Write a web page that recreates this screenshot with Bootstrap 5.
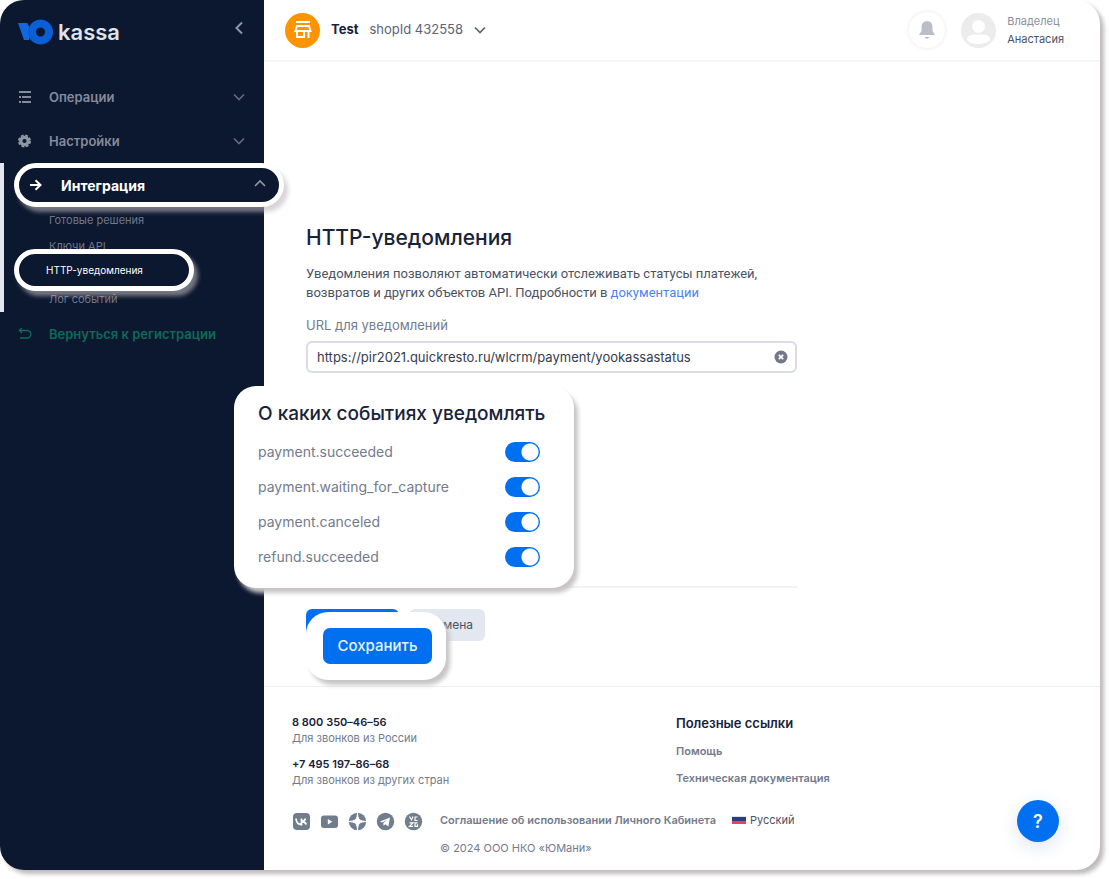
<!DOCTYPE html>
<html lang="ru">
<head>
<meta charset="utf-8">
<meta name="viewport" content="width=device-width, initial-scale=1">
<title>ЮKassa — HTTP-уведомления</title>
<link href="https://cdn.jsdelivr.net/npm/bootstrap@5.3.0/dist/css/bootstrap.min.css" rel="stylesheet">
<style>
  :root { --navy: #0c182f; --blue: #0070f0; --ink: #17233b; --muted: #737b8c; --lift: 4px 5px 4px #c9c5c7; }
  body { font-family: Inter, "Noto Sans", sans-serif; font-size: 13px; line-height: 19px; color: #4a5264; background: #fff; }
  a { text-decoration: none; color: var(--muted); }
  .page { min-height: 100vh; padding: 0 9px 9px 0; }
  .shell { border-radius: 24px; box-shadow: 4px 4px 4px #bfbbbc; background: #fff; }
  /* sidebar */
  .side { width: 264px; flex: none; background: var(--navy); border-radius: 24px 0 0 24px; z-index: 2; }
  .brand { height: 63px; padding: 0 20px 0 18px; color: #dfe3ea; font: 600 22px/26px Inter, sans-serif; }
  .side-item { height: 44px; padding: 0 19px 0 17px; font-size: 13px; font-weight: 600; color: #858b9b; }
  .side-item svg.lead-icon { width: 15px; margin-right: 17px; }
  .side-item svg.ms-auto { color: #636a7c; }
  .group { border-left: 4px solid #e3e6f1; }
  .pill { border: 5px solid #fff; border-radius: 22px; background: var(--navy); color: #fff; box-shadow: 4px 5px 4px rgba(190,184,188,.6); z-index: 1; }
  .pill-wide { height: 44px; margin: 0 -20px 0 10px; padding: 0 13px 0 10px; gap: 18px; font-size: 14px; font-weight: 700; }
  .pill-sub { height: 42px; margin: -10px 70px -5px 10px; padding: 0 27px; font-size: 10px; }
  .side-sub { height: 26px; padding-left: 45px; font-size: 11px; color: #70778a; }
  .side-item.back { color: #0e6a59; }
  /* header */
  .top { height: 62px; border-bottom: 2px solid #f3f4f6; padding: 0 36px 0 21px; }
  .shop { width: 35px; height: 35px; background: #ff9300; }
  .shop-pick { font-size: 13px; color: #5b6375; gap: 11px; margin-left: 11px; }
  .bell { width: 36px; height: 36px; box-shadow: 0 0 5px #e8e8ea; background: #fff; }
  .who { font-size: 11px; line-height: 18px; margin-left: 11px; color: #8b909d; }
  /* form */
  .content { padding: 162px 42px 45px; }
  .content-form { max-width: 491px; }
  .intro { font: 13px/19px Roboto, Inter, sans-serif; margin-bottom: 14px; }
  h1 { font-size: 21px; line-height: 28px; font-weight: 500; color: var(--ink); margin-bottom: 12px; }
  h2 { font-size: 19px; line-height: 24px; font-weight: 500; color: var(--ink); margin-bottom: 8px; white-space: nowrap; }
  .url-label { margin-bottom: 6px; color: var(--muted); }
  .url { height: 32px; border: 2px solid #d9dbe8; border-radius: 6px; font-size: 13px; padding: 0 36px 0 9px; color: #343c4e; }
  .clear { top: 8px; right: 9px; }
  .events { width: 340px; height: 202px; margin: 13px 0 -2px -72px; padding: 16px 34px 0 24px; border-radius: 22px; background: #fff; box-shadow: var(--lift); z-index: 3; }
  .event { height: 35px; font-size: 14px; color: var(--muted); }
  .event .form-check-input { width: 35px; height: 20px; margin: 0; border: 0; box-shadow: none; background: var(--blue) radial-gradient(circle at 25px 10px, #fff 8px, transparent 9px); }
  .rule { border-top: 2px solid #f1f2f4; }
  .actions { margin-top: 21px; height: 32px; gap: 10px; }
  .actions .under { width: 93px; background: var(--blue); border-radius: 6px; }
  .cancel { width: 76px; background: #e3e7f0; border-radius: 6px; color: #4a5264; padding: 0 12px; text-align: right; font-size: 12px; }
  .save-lift { top: 3px; left: 0; width: 140px; height: 68px; padding: 16px 14px 16px 17px; border-radius: 22px; background: #fff; box-shadow: var(--lift); }
  .save { width: 100%; height: 36px; background: var(--blue); color: #e8f2ff; border-radius: 7px; font-size: 15px; font-weight: 500; padding: 0; }
  /* footer */
  .foot { border-top: 1px solid #eceef1; padding: 27px 28px 0; font-size: 11px; line-height: 16px; color: var(--muted); }
  .foot-cols { min-height: 98px; }
  .foot-phones { width: 384px; }
  .foot-phones div { margin-top: 10px; }
  .foot b { font-weight: 600; color: var(--ink); }
  .foot .links { font-weight: 600; gap: 11px; }
  .foot .links b { font-size: 13px; line-height: 18px; }
  .terms { font-weight: 600; }
  .lang { font-size: 11px; line-height: 16px; color: #4a5264; }
  .social { width: 148px; gap: 9px; }
  .help { right: 41px; bottom: 28px; width: 42px; height: 42px; background: var(--blue); color: #fff; font-size: 18px; font-weight: 600; box-shadow: 0 5px 20px #dfe3ee; padding: 0; }
</style>
</head>
<body>
<svg class="d-none">
  <symbol id="down" viewBox="0 0 12 8"><path d="M1 1.500l5 5 5-5" fill="none" stroke="currentColor" stroke-width="1.700"/></symbol>
</svg>
<div class="page d-flex">
<div class="shell d-flex flex-grow-1 position-relative">

  <aside class="side position-relative">
    <div class="brand d-flex align-items-center">
      <svg width="36" height="26" viewBox="0 0 36 26"><path d="M0 4h9l2 3v14H6z" fill="#1268e0"/><path fill-rule="evenodd" d="M22.500 0.500a12.500 12.500 0 1 0 .01 0zM22.500 8.500a4.500 4.500 0 1 1-.01 0z" fill="#0b5fd6"/></svg>
      <span class="ms-1">kassa</span>
      <a href="#" class="ms-auto d-flex mb-2" aria-label="Свернуть меню"><svg width="10" height="14" viewBox="0 0 10 14"><path d="M8 1.500L2.500 7 8 12.500" fill="none" stroke="#8f95a3" stroke-width="2"/></svg></a>
    </div>
    <nav class="mt-2 pt-1">
      <a href="#" class="side-item d-flex align-items-center">
        <svg class="lead-icon" height="14" viewBox="0 0 15 14" fill="#858b9b"><path d="M5 1h9v2H5zM5 6h9v2H5zM5 11h9v2H5zM2 1h9v2H2zM2 6h2v2H2zM2 11h2v2H2z"/></svg>
        Операции<svg class="ms-auto" width="12" height="8"><use href="#down"/></svg>
      </a>
      <a href="#" class="side-item d-flex align-items-center">
        <svg class="lead-icon" height="14" viewBox="0 0 15 14"><circle cx="7.500" cy="7" r="3.700" fill="none" stroke="#9096a5" stroke-width="3.200"/><circle cx="7.500" cy="7" r="5.600" fill="none" stroke="#9096a5" stroke-width="1.800" stroke-dasharray="2.900 1.500"/></svg>
        Настройки<svg class="ms-auto" width="12" height="8"><use href="#down"/></svg>
      </a>
      <div class="group">
        <a href="#" class="pill pill-wide d-flex align-items-center position-relative">
          <svg width="14" height="12" viewBox="0 0 14 12"><path d="M1 6h10M6.500 1.200L11.500 6l-5 4.800" fill="none" stroke="#fff" stroke-width="2"/></svg>
          <span>Интеграция</span>
          <svg class="ms-auto" width="12" height="12" viewBox="0 0 12 12"><path d="M1 7l5-5 5 5" fill="none" stroke="#8f95a3" stroke-width="1.700"/></svg>
        </a>
        <a href="#" class="side-sub d-flex align-items-center">Готовые решения</a>
        <a href="#" class="side-sub d-flex align-items-center">Ключи API</a>
        <a href="#" class="pill pill-sub d-flex align-items-center position-relative" aria-current="page">HTTP-уведомления</a>
        <a href="#" class="side-sub d-flex align-items-center">Лог событий</a>
      </div>
      <a href="#" class="side-item back d-flex align-items-center">
        <svg class="lead-icon" height="14" viewBox="0 0 15 14" fill="none" stroke="#0e6a59" stroke-width="1.400"><path d="M5 1L2.500 3.500 5 6M2.500 3.500H10a3.500 3.500 0 0 1 0 7.500H3"/></svg>
        Вернуться к регистрации
      </a>
    </nav>
  </aside>

  <div class="d-flex flex-column flex-grow-1">
    <header class="top d-flex align-items-center">
      <span class="shop rounded-circle d-flex align-items-center justify-content-center">
        <svg width="20" height="20" viewBox="0 0 20 20" fill="none" stroke="#fff" stroke-width="2"><path d="M3 2h14M4 6h12l1.500 5h-15zM4 11v6h7v-6M15.500 11v7"/></svg>
      </span>
      <button type="button" class="btn shop-pick p-0 border-0 d-flex align-items-center">
        <b class="fw-bold" style="color:#17233b">Test</b><span>shopId 432558</span><svg width="12" height="8"><use href="#down"/></svg>
      </button>
      <button type="button" class="btn bell rounded-circle p-0 border-0 ms-auto me-3 d-flex align-items-center justify-content-center" aria-label="Оповещения">
        <svg width="18" height="20" viewBox="0 0 18 20" fill="#b9bec8"><path d="M9 1a5.500 5.500 0 0 0-5.500 5.500V11L1 15h16l-2.500-4V6.500A5.500 5.500 0 0 0 9 1zM6 17h6l-3 2z"/></svg>
      </button>
      <svg width="35" height="35" viewBox="0 0 35 35"><circle cx="17.500" cy="17.500" r="17.500" fill="#ececec"/><circle cx="17.500" cy="13.500" r="6.500" fill="#fff"/><path d="M6 27c0-5 4-5.500 8-5.500h7c4 0 8 .5 8 5.500-2 2-6 4-11.500 4S8 29 6 27z" fill="#fff"/></svg>
      <div class="who">Владелец<br><span style="color:#4a5264">Анастасия</span></div>
    </header>

    <main class="content">
      <form class="content-form">
        <h1>HTTP-уведомления</h1>
        <p class="intro">Уведомления позволяют автоматически отслеживать статусы платежей,<br>возвратов и других объектов API. Подробности в <a href="#" style="color:#4c83ef">документации</a></p>
        <label for="url" class="d-block url-label">URL для уведомлений</label>
        <div class="position-relative">
          <input id="url" type="text" class="form-control url" value="https://pir2021.quickresto.ru/wlcrm/payment/yookassastatus">
          <button type="button" class="clear btn p-0 border-0 position-absolute d-flex" aria-label="Очистить"><svg width="14" height="16" viewBox="0 0 14 16"><circle cx="7" cy="8" r="6.500" fill="#74768a"/><path d="M4.800 5.800l4.400 4.400M9.200 5.800l-4.400 4.400" stroke="#fff" stroke-width="1.700"/></svg></button>
        </div>
        <section class="events position-relative">
          <h2>О каких событиях уведомлять</h2>
          <div class="event form-switch p-0 d-flex align-items-center justify-content-between"><label for="e1">payment.succeeded</label><input class="form-check-input" type="checkbox" role="switch" id="e1" checked></div>
          <div class="event form-switch p-0 d-flex align-items-center justify-content-between"><label for="e2">payment.waiting_for_capture</label><input class="form-check-input" type="checkbox" role="switch" id="e2" checked></div>
          <div class="event form-switch p-0 d-flex align-items-center justify-content-between"><label for="e3">payment.canceled</label><input class="form-check-input" type="checkbox" role="switch" id="e3" checked></div>
          <div class="event form-switch p-0 d-flex align-items-center justify-content-between"><label for="e4">refund.succeeded</label><input class="form-check-input" type="checkbox" role="switch" id="e4" checked></div>
        </section>
        <div class="rule"></div>
        <div class="actions d-flex position-relative">
          <span class="under"></span>
          <button type="button" class="btn cancel border-0">Отмена</button>
          <div class="save-lift position-absolute"><button type="submit" class="btn save border-0">Сохранить</button></div>
        </div>
      </form>
    </main>

    <footer class="foot">
      <div class="foot-cols d-flex">
        <div class="foot-phones">
          <b>8 800 350–46–56</b><br>Для звонков из России
          <div><b>+7 495 197–86–68</b><br>Для звонков из других стран</div>
        </div>
        <div class="links d-flex flex-column"><b>Полезные ссылки</b><a href="#">Помощь</a><a href="#">Техническая документация</a></div>
      </div>
      <div class="d-flex">
        <div class="social d-flex">
          <a href="#" aria-label="VK"><svg width="19" height="19" viewBox="0 0 19 19"><rect x="1" y="1" width="17" height="17" rx="4" fill="#6f7d8c"/><path d="M4 6.500c.3 3.800 2 6 5.500 6v-6M9.500 9.500c2 0 3.500-1.200 4-3M9.500 9.500c2.300 0 4 1.200 4.800 3" fill="none" stroke="#fff" stroke-width="1.800"/></svg></a>
          <a href="#" aria-label="YouTube"><svg width="19" height="19" viewBox="0 0 19 19"><rect x="1" y="3.500" width="17" height="12.500" rx="3" fill="#6f7d8c"/><path d="M7.800 7l4.500 2.700-4.500 2.700z" fill="#fff"/></svg></a>
          <a href="#" aria-label="Дзен"><svg width="19" height="19" viewBox="0 0 19 19"><circle cx="9.500" cy="9.500" r="8.700" fill="#6f7d8c"/><path d="M9.500 0c.3 7.500 1.500 9.200 9.500 9.500-8 .3-9.200 2-9.500 9.500C9.200 11.500 8 9.800 0 9.500 8 9.200 9.200 7.500 9.500 0z" fill="#fff" stroke="#fff"/></svg></a>
          <a href="#" aria-label="Telegram"><svg width="19" height="19" viewBox="0 0 19 19"><circle cx="9.500" cy="9.500" r="8.700" fill="#6f7d8c"/><path d="M4 9.500l10-4-1.600 9-3.200-2.200-1.600 1.500-.3-2.700 4-3.500-5 3z" fill="#fff"/></svg></a>
          <a href="#" aria-label="VC"><svg width="19" height="19" viewBox="0 0 19 19"><circle cx="9.500" cy="9.500" r="8.700" fill="#6f7d8c"/><path d="M5.500 4.500l2 3.500 1.500-3.500M13.500 5h-2.500v3.500h2.500M5.500 10.800H9l-3.500 3.500H9M13.500 10.800H11v3.500h2.500v-2" fill="none" stroke="#fff" stroke-width="1.200"/></svg></a>
        </div>
        <div>
          <div class="d-flex align-items-center"><a href="#" class="terms">Соглашение об использовании Личного Кабинета</a>
          <button type="button" class="btn lang p-0 border-0 d-flex align-items-center ms-3"><svg class="me-1" width="14" height="9" viewBox="0 0 14 9"><path fill="#dfe3ee" d="M0 0h14v2H0z"/><path fill="#2e3b8d" d="M0 1h14v4H0z"/><path fill="#e0485a" d="M0 5h14v3H0z"/></svg>Русский</button></div>
          <div class="mt-2 pt-1">© 2024 ООО НКО «ЮМани»</div>
        </div>
      </div>
    </footer>
  </div>
  <button type="button" class="btn help rounded-circle position-absolute border-0" aria-label="Помощь">?</button>
</div>
</div>
<script src="https://cdn.jsdelivr.net/npm/bootstrap@5.3.0/dist/js/bootstrap.bundle.min.js"></script>
</body>
</html>
